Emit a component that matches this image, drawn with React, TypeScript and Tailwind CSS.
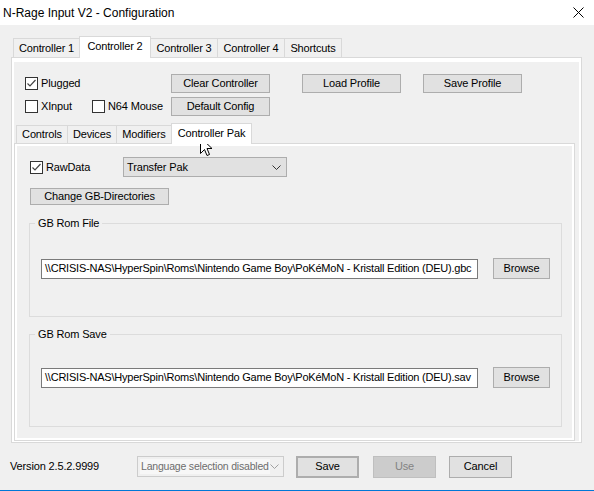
import type { ReactNode } from 'react';

type TabDef = { label: string; width: string; selected?: boolean };

const CONTROLLER_TABS: TabDef[] = [
  { label: 'Controller 1', width: 'w-[67px]' },
  { label: 'Controller 2', width: 'w-[72px]', selected: true },
  { label: 'Controller 3', width: 'w-[68px]' },
  { label: 'Controller 4', width: 'w-[68px]' },
  { label: 'Shortcuts', width: 'w-[58px]' }
];

const PAGE_TABS: TabDef[] = [
  { label: 'Controls', width: 'w-[52px]' },
  { label: 'Devices', width: 'w-[50px]' },
  { label: 'Modifiers', width: 'w-[56px]' },
  { label: 'Controller Pak', width: 'w-[81px]', selected: true }
];

const ROM_PATH = '\\\\CRISIS-NAS\\HyperSpin\\Roms\\Nintendo Game Boy\\PoKéMoN - Kristall Edition (DEU)';

function TabStrip({ tabs, small }: { tabs: TabDef[]; small?: boolean }) {
  return (
    <div className={`flex items-end ${small ? 'h-[20px] pl-[2px]' : 'h-[21px] pl-[2px]'}`}>
      {tabs.map((tab, i) => (
        <div
          key={tab.label}
          className={`${tab.width} ${i > 0 ? '-ml-px' : ''} flex items-center justify-center border border-b-0 border-[#d9d9d9] ${
            tab.selected
              ? `relative z-10 -mb-px bg-white pb-[2px] ${small ? 'h-[21px]' : 'h-[22px]'}`
              : `bg-[#f0f0f0] ${small ? 'h-[18px]' : 'h-[19px]'}`
          }`}
        >
          {tab.label}
        </div>
      ))}
    </div>
  );
}

function Button({ children, className = '' }: { children: ReactNode; className?: string }) {
  return (
    <div className={`flex items-center justify-center border border-[#adadad] bg-[#e1e1e1] ${className}`}>
      {children}
    </div>
  );
}

function Checkbox({ label, checked, className = '' }: { label: string; checked?: boolean; className?: string }) {
  return (
    <div className={`flex items-center ${className}`}>
      <div className="w-[13px] h-[13px] border border-[#333333] bg-white flex items-center justify-center">
        {checked && (
          <svg width="11" height="11" viewBox="0 0 11 11">
            <polyline points="1.5,5.5 4,8 9.5,2" fill="none" stroke="#444444" strokeWidth="1.2" />
          </svg>
        )}
      </div>
      <span className="ml-[3px]">{label}</span>
    </div>
  );
}

function Chevron({ color }: { color: string }) {
  return (
    <svg className="shrink-0" width="9" height="5" viewBox="0 0 9 5">
      <polyline points="0.5,0.5 4.5,4.5 8.5,0.5" fill="none" stroke={color} strokeWidth="1" />
    </svg>
  );
}

function RomGroup({ title, file, className = '', padding }: { title: string; file: string; className?: string; padding: string }) {
  return (
    <fieldset className={`border border-[#dcdcdc] px-[5px] ${padding} ${className}`}>
      <legend className="px-[3px] leading-[16px]">{title}</legend>
      <div className="flex items-center h-[21px] px-[6px]">
        <div className="w-[437px] h-[20px] border border-[#7a7a7a] bg-white flex items-center pl-[3px] whitespace-nowrap overflow-hidden tracking-[-0.22px]">
          {file}
        </div>
        <Button className="ml-auto w-[57px] h-[21px]">Browse</Button>
      </div>
    </fieldset>
  );
}

export default function App() {
  return (
    <div className="relative w-[594px] h-[491px] overflow-hidden bg-[#f0f0f0] text-black text-[11px] tracking-[-0.15px] font-['Liberation_Sans',Arial,sans-serif]">
      {/* Title bar */}
      <div className="h-[25px] bg-white flex items-center justify-between pl-[3px] pr-[10px]">
        <span className="text-[12px] tracking-normal">N-Rage Input V2 - Configuration</span>
        <svg width="11" height="11" viewBox="0 0 11 11">
          <path d="M0.5 0.5 L10.5 10.5 M10.5 0.5 L0.5 10.5" stroke="#000000" strokeWidth="1" />
        </svg>
      </div>

      {/* Controller tabs */}
      <div className="mt-[11px] ml-[11px]">
        <TabStrip tabs={CONTROLLER_TABS} />
      </div>
      <div className="ml-[11px] w-[571px] h-[386px] border border-[#d9d9d9] bg-white pt-[4px] px-[2px] pb-[1px] flex flex-col">
        <div className="flex-1 bg-[#f0f0f0] flex flex-col">
          {/* Controller options */}
          <div className="h-[61px] pt-[12px] pl-[11px] flex flex-col gap-[4px]">
            <div className="flex items-center h-[19px]">
              <Checkbox label="Plugged" checked className="w-[146px]" />
              <Button className="w-[99px] h-[19px]">Clear Controller</Button>
              <Button className="ml-[32px] w-[99px] h-[19px]">Load Profile</Button>
              <Button className="ml-[22px] w-[99px] h-[19px]">Save Profile</Button>
            </div>
            <div className="flex items-center h-[19px]">
              <Checkbox label="XInput" className="w-[67px]" />
              <Checkbox label="N64 Mouse" className="w-[79px]" />
              <Button className="w-[99px] h-[19px]">Default Config</Button>
            </div>
          </div>

          {/* Page tabs */}
          <TabStrip tabs={PAGE_TABS} small />
          <div className="flex-1 mr-[4px] border border-[#d9d9d9] bg-white p-[2px] flex flex-col">
            <div className="flex-1 bg-[#f0f0f0] pl-[12px] pr-[10px] pt-[11px]">
              <div className="flex items-center h-[20px]">
                <Checkbox label="RawData" checked className="w-[94px] pl-[1px]" />
                <div className="w-[164px] h-[20px] border border-[#adadad] bg-[#e1e1e1] flex items-center justify-between pl-[3px] pr-[5px]">
                  <span>Transfer Pak</span>
                  <Chevron color="#333333" />
                </div>
              </div>
              <Button className="mt-[11px] ml-[1px] w-[139px] h-[17px]">Change GB-Directories</Button>
              <RomGroup title="GB Rom File" file={`${ROM_PATH}.gbc`} className="mt-[10px]" padding="pt-[27px] pb-[37px]" />
              <RomGroup title="GB Rom Save" file={`${ROM_PATH}.sav`} className="mt-[9px]" padding="pt-[25px] pb-[38px]" />
            </div>
          </div>
        </div>
      </div>

      {/* Footer */}
      <div className="h-[47px] flex items-center pl-[10px]">
        <span className="w-[127px]">Version 2.5.2.9999</span>
        <div className="w-[147px] h-[21px] border border-[#cccccc] bg-[#f0f0f0] flex items-center pl-[2px] pr-[4px]">
          <span className="w-[130px] bg-[#f7f7f7] text-[#6d6d6d] text-[10.5px] pl-[1px] leading-[15px] whitespace-nowrap tracking-[-0.2px]">
            Language selection disabled
          </span>
          <span className="ml-auto flex">
            <Chevron color="#a0a0a0" />
          </span>
        </div>
        <Button className="ml-[12px] w-[63px] h-[22px] border-2 border-[#0078d7]">Save</Button>
        <div className="ml-[14px] w-[63px] h-[22px] border border-[#bfbfbf] bg-[#cccccc] text-[#838383] flex items-center justify-center">
          Use
        </div>
        <Button className="ml-[13px] w-[63px] h-[22px]">Cancel</Button>
      </div>
      <div className="h-[1px] bg-[#0078d7]" />

      {/* Mouse pointer over the Controller Pak tab */}
      <svg className="absolute left-[200px] top-[137px]" width="13" height="20" viewBox="0 0 13 20">
        <path d="M0.5 0.5 L0.5 16.5 L4.5 12.5 L7 18.5 L9.5 17.5 L7 11.5 L12 11.5 Z" fill="#ffffff" stroke="#000000" strokeWidth="1" />
      </svg>
    </div>
  );
}
